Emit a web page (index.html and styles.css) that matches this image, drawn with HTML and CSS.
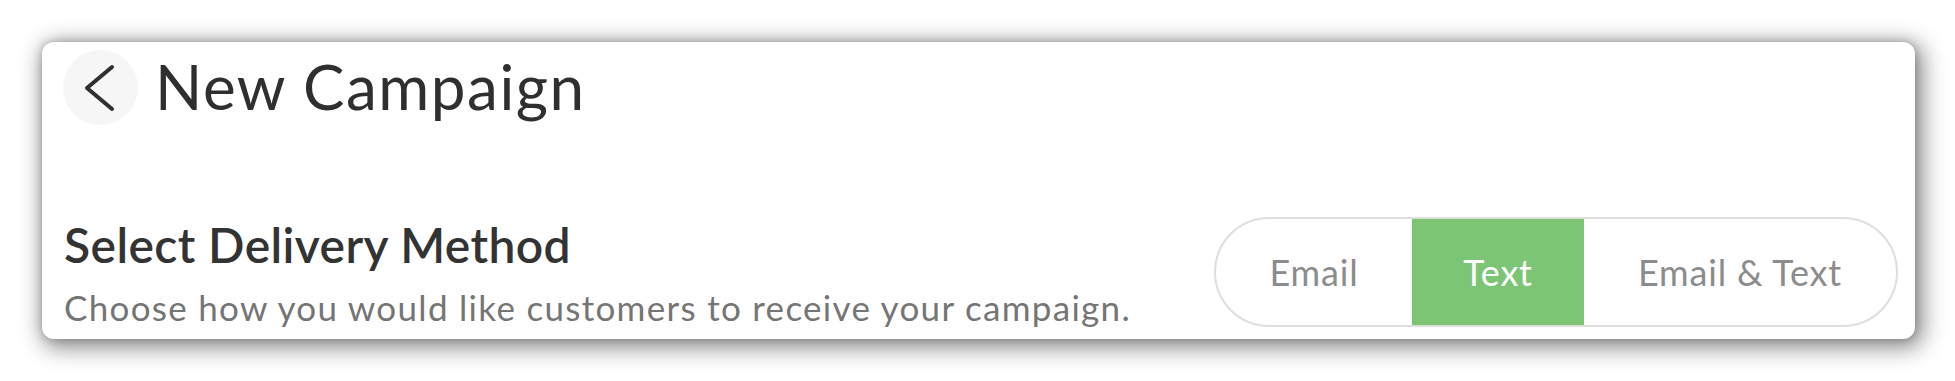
FILE: index.html
```html
<!DOCTYPE html>
<html lang="en">
<head>
<meta charset="utf-8">
<title>New Campaign</title>
<link rel="stylesheet" href="styles.css">
</head>
<body>
<div class="card">
  <div class="header">
    <button class="back" aria-label="Back">
      <svg width="32" height="48" viewBox="0 0 32 48" aria-hidden="true">
        <polyline points="29,3 4,24 29,45" fill="none" stroke="#2f2f2f" stroke-width="4" stroke-linecap="round" stroke-linejoin="round"/>
      </svg>
    </button>
    <h1 class="title">New Campaign</h1>
  </div>
  <div class="section">
    <div class="section-text">
      <h2 class="section-title">Select Delivery Method</h2>
      <p class="section-desc">Choose how you would like customers to receive your campaign.</p>
    </div>
    <div class="toggle">
      <div class="seg seg-email">Email</div>
      <div class="seg seg-text active">Text</div>
      <div class="seg seg-both">Email &amp; Text</div>
    </div>
  </div>
</div>
</body>
</html>
```

FILE: styles.css
```css
html, body {
  margin: 0;
  padding: 0;
  background: #ffffff;
}
body {
  padding: 42px 40px 0 42px;
  min-height: 381px;
  box-sizing: border-box;
  font-family: Lato, "Open Sans", Arial, sans-serif;
}
.card {
  background: #ffffff;
  border-radius: 12px;
  box-shadow: 4px 5px 22px 4px rgba(0, 0, 0, 0.45), 0 0 10px rgba(0, 0, 0, 0.2);
  height: 297px;
  box-sizing: border-box;
  padding: 8px 17px 12px 21px;
  display: flex;
  flex-direction: column;
  justify-content: space-between;
}
.header {
  display: flex;
  align-items: center;
  gap: 17px;
}
.back {
  width: 75px;
  height: 75px;
  border-radius: 50%;
  border: none;
  background: #f6f6f6;
  display: flex;
  align-items: center;
  justify-content: center;
  padding: 0 4px 0 0;
}
.title {
  margin: 0 0 3px 0;
  font-weight: 400;
  font-size: 62px;
  letter-spacing: 1.5px;
  color: #2f2f2f;
  line-height: 1;
}
.section {
  display: flex;
  align-items: flex-end;
  justify-content: space-between;
}
.section-text {
  padding-left: 1px;
}
.section-title {
  margin: 0 0 14px 0;
  font-weight: 600;
  font-size: 48px;
  letter-spacing: 0.4px;
  line-height: 56px;
  color: #333333;
}
.section-desc {
  margin: 0;
  font-size: 35px;
  letter-spacing: 1.3px;
  line-height: 40px;
  color: #757575;
}
.toggle {
  display: flex;
  height: 110px;
  box-sizing: border-box;
  border: 2px solid #dedede;
  border-radius: 55px;
  overflow: hidden;
}
.seg {
  display: flex;
  align-items: center;
  justify-content: center;
  font-size: 36px;
  letter-spacing: 0.8px;
  color: #8c8c8c;
}
.seg-email { width: 196px; }
.seg-text { width: 172px; }
.seg-both { width: 312px; }
.seg.active {
  background: #7bc575;
  color: #ffffff;
}
```
